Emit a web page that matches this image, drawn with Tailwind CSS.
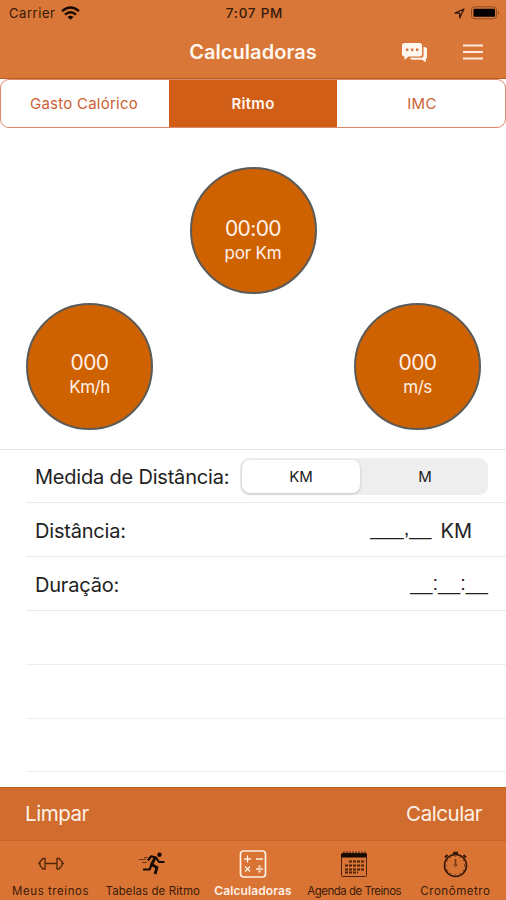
<!DOCTYPE html>
<html lang="pt-BR">
<head>
<meta charset="utf-8">
<meta name="viewport" content="width=device-width, initial-scale=1">
<title>Calculadoras</title>
<script src="https://cdn.jsdelivr.net/npm/@tailwindcss/browser@4"></script>
</head>
<body class="w-[506px] h-[900px] overflow-hidden bg-white font-['Inter','Liberation_Sans',sans-serif] text-[#222] flex flex-col whitespace-nowrap">
<header class="h-[79px] shrink-0 bg-[#d97738] border-b border-[#bd5c20]">
  <div class="h-[26px] grid grid-cols-3 items-center pl-[9px] pr-[6px] text-[13px] text-[#351a0a]">
    <div class="flex items-center gap-[6px]"><span class="tracking-[0.55px] pt-[2px]">Carrier</span>
      <svg class="w-[19px] h-[14px]" viewBox="0 0 19 14" fill="none" stroke="#160a03" stroke-width="2.4"><path d="M1 5.2Q9.5-2.2 18 5.2M4 8.6Q9.5 3.7 15 8.6"/><path d="M6.5 10.9Q9.5 8.5 12.5 10.9L9.5 13.8Z" fill="#160a03" stroke="none"/></svg>
    </div>
    <div class="text-center font-medium text-[13.5px] tracking-[0.75px]">7:07 PM</div>
    <div class="flex justify-end items-center gap-[6px]">
      <svg class="w-[11px] h-[11px]" viewBox="0 0 11 11" fill="none" stroke="#351a0a" stroke-width="1.3" stroke-linejoin="round"><path d="M10 1 .9 5.1H5.7V9.9Z"/></svg>
      <svg class="w-[29px] h-[14px]" viewBox="0 0 29 14"><rect x=".5" y=".8" width="25" height="12" rx="3" fill="none" stroke="#8f4d23"/><rect x="2.5" y="2.8" width="21.5" height="8" rx="1" fill="#000"/><path d="M27 4.5q2 2.3 0 4.6z" fill="#8f4d23"/></svg>
    </div>
  </div>
  <div class="h-[52px] grid grid-cols-[1fr_auto_1fr] items-center">
    <span></span>
    <h1 class="text-[20px] font-semibold text-[#fff6ef] tracking-[0.05px]">Calculadoras</h1>
    <div class="flex justify-end items-center gap-[35px] pr-[23px]">
      <svg class="w-[27px] h-[21px]" viewBox="0 0 27 21"><path d="M22.5 5H23.5Q26 5 26 7.500V14.500Q26 17 24.800 17V20.300L21 17.800H11.500Q9.200 17.800 9 15.800H20Q22.500 15.800 22.500 13.300Z" fill="#fff6ef"/><path d="M3.500 1H18.500Q21 1 21 3.500V12Q21 14.500 18.500 14.500H7.500L3.500 18V14.500Q1 14.500 1 12V3.500Q1 1 3.500 1Z" fill="#fff6ef"/><path d="M5 6.500h2.400v2.400H5zm5 0h2.400v2.400H10zm5 0h2.400v2.400H15z" fill="#d97738"/></svg>
      <svg class="w-[20px] h-[16px]" viewBox="0 0 20 16" stroke="#ffe9dc" stroke-width="2"><path d="M0 1.500H20M0 8H20M0 14.500H20"/></svg>
    </div>
  </div>
</header>
<nav class="h-[49px] shrink-0 rounded-[9px] border border-[#dc8a6b] overflow-hidden grid grid-cols-[168px_168px_1fr] items-stretch text-center text-[15px] text-[#cd6035]">
  <div class="flex items-center justify-center tracking-[0.25px] pt-px pr-[2px]">Gasto Calórico</div>
  <div class="flex items-center justify-center bg-[#d05e16] text-[#fff6ef] font-semibold tracking-[0.3px] pt-px">Ritmo</div>
  <div class="flex items-center justify-center tracking-[0.3px] pt-px pl-[2px]">IMC</div>
</nav>
<section class="h-[322px] shrink-0 border-b border-[#e6e6e6] pt-[39px] px-[26px] text-[#fff0e8] leading-none">
  <div class="flex justify-center"><div class="w-[127px] h-[127px] rounded-full bg-[#cf6200] border-2 border-[#5b5b59] pt-[49px] flex flex-col items-center gap-[6px]"><span class="text-[21px] tracking-[-0.6px]">00:00</span><span class="text-[17px] tracking-[-0.2px]">por Km</span></div></div>
  <div class="flex justify-between mt-[9px] -mr-px">
    <div class="w-[127px] h-[127px] rounded-full bg-[#cf6200] border-2 border-[#5b5b59] pt-[47px] flex flex-col items-center gap-[6px]"><span class="text-[21px] tracking-[-0.6px]">000</span><span class="text-[17px] tracking-[-0.5px]">Km/h</span></div>
    <div class="w-[127px] h-[127px] rounded-full bg-[#cf6200] border-2 border-[#5b5b59] pt-[47px] flex flex-col items-center gap-[6px]"><span class="text-[21px] tracking-[-0.6px]">000</span><span class="text-[17px] tracking-[-0.5px]">m/s</span></div>
  </div>
</section>
<main class="h-[337px] shrink-0 pl-[26px] text-[20px]">
  <div class="h-[53px] border-b border-[#e9e9e9] flex items-center justify-between pl-[9px] pr-[18px]">
    <span class="tracking-[-0.2px] pt-[2px]">Medida de Distância:</span>
    <div class="w-[248px] h-[37px] rounded-[9px] bg-[#eeeeef] p-[2px] grid grid-cols-[118px_1fr] text-[15px] text-center mt-px">
      <div class="rounded-[8px] bg-white shadow-[0_1px_3px_#0003] flex items-center justify-center pt-px">KM</div>
      <div class="flex items-center justify-center pt-px pl-[4px]">M</div>
    </div>
  </div>
  <div class="h-[54px] border-b border-[#e9e9e9] flex items-center justify-between pl-[9px] pr-[34px] pt-[2px]"><span class="tracking-[-0.2px]">Distância:</span><span class="flex items-center gap-[9px]"><span class="pb-[5px] font-medium font-['Liberation_Sans',sans-serif]">___,__</span><span>KM</span></span></div>
  <div class="h-[54px] border-b border-[#e9e9e9] flex items-center justify-between pl-[9px] pr-[18px] pt-[2px]"><span class="tracking-[-0.2px]">Duração:</span><span class="pb-[4px] font-['Liberation_Sans',sans-serif]">__:__:__</span></div>
  <div class="h-[54px] border-b border-[#eeeeee]"></div>
  <div class="h-[54px] border-b border-[#eeeeee]"></div>
  <div class="h-[53px] border-b border-[#eeeeee]"></div>
</main>
<div class="h-[53px] shrink-0 bg-[#d06d2e] border-t border-[#bd5c20] pl-[25px] pr-[24px] flex items-center justify-between text-[20.5px] tracking-[-0.45px] text-[#fff0e6]"><span>Limpar</span><span>Calcular</span></div>
<footer class="h-[61px] shrink-0 bg-[#d97435] border-t border-[#c66529] grid grid-cols-5 text-center text-[11.5px] text-[#3d1b08]">
  <div class="flex flex-col items-center pt-[8px] gap-[4px]">
    <svg class="w-[30px] h-[30px]" viewBox="0 0 30 30" fill="none" stroke="#512607" stroke-width="1.300"><path d="M9 14.500H21M2 14.500H4M26 14.500H28M4 12.500 7 9.500H9V20H7L4 16.500ZM26 12.500 23 9.500H21V20H23L26 16.500Z"/></svg><span class="leading-[16px] tracking-[0.55px]">Meus treinos</span>
  </div>
  <div class="flex flex-col items-center pt-[8px] gap-[4px]">
    <svg class="w-[30px] h-[30px]" viewBox="0 0 30 30" fill="none" stroke="#160a03" stroke-width="2.200" stroke-linejoin="round"><circle cx="22.500" cy="5.700" r="2.200" fill="#160a03" stroke="none"/><path d="M11 11.500 14 7.300 19 8.500 22 13H27.500"/><path d="M18 9 14.500 15.500 20 18.500 18 25" stroke-width="2.800"/><path d="M14.500 16 12.500 20.500H6"/><path d="M2 10.500H9M5 13.500H10M7 8.500H11" stroke="#743611" stroke-width="1"/></svg><span class="leading-[16px] tracking-[0.08px] pl-[2px]">Tabelas de Ritmo</span>
  </div>
  <div class="flex flex-col items-center pt-[8px] gap-[4px] text-[#fff0e6] font-semibold">
    <svg class="w-[30px] h-[30px]" viewBox="0 0 30 30" fill="none" stroke="#fff0e6" stroke-width="1.300"><rect x="2.500" y="2" width="25" height="26" rx="3" stroke-width="1.700"/><path d="M6 10H13M9.500 6.500V13.500M18 10H25M7 17.500 12 22.500M12 17.500 7 22.500M18 20H25"/><path d="M20.500 16.500h2v2h-2zm0 5h2v2h-2z" fill="#fff0e6" stroke="none"/></svg><span class="leading-[16px] text-[12px] tracking-[0.1px]">Calculadoras</span>
  </div>
  <div class="flex flex-col items-center pt-[8px] gap-[4px]">
    <svg class="w-[30px] h-[30px]" viewBox="0 0 30 30" fill="none" stroke="#4c2209"><rect x="2.500" y="4.500" width="25" height="23" rx="1"/><path d="M2.500 5H27.500V8H2.500Z" fill="#160a03" stroke="#160a03"/><path d="M5 2.500V5M8 2.500V5M11 2.500V5M14 2.500V5M17 2.500V5M20 2.500V5M23 2.500V5M26 2.500V5" stroke="#160a03"/><path d="M10 12.500H25M6 16.500H25M6 20.500H25M6 23.500H19" stroke-width="2" stroke-dasharray="3 1"/></svg><span class="leading-[16px] tracking-[-0.5px]">Agenda de Treinos</span>
  </div>
  <div class="flex flex-col items-center pt-[8px] gap-[4px]">
    <svg class="w-[30px] h-[30px]" viewBox="0 0 30 30" fill="none" stroke="#351707" stroke-width="1.600"><circle cx="15.500" cy="16.500" r="11"/><circle cx="15.500" cy="16.500" r="9.200" stroke-width="1" stroke-dasharray="1 3.700"/><path d="M13 4H18M15.500 3V6" stroke-width="2.400"/><path d="M5 8.500 7.500 6M23.500 6 26 8.500" stroke-width="2"/><path d="M15.500 10V16" stroke="#713511"/><circle cx="15.500" cy="16.300" r="1.200" stroke="#713511" stroke-width="1"/></svg><span class="leading-[16px] tracking-[0.55px]">Cronômetro</span>
  </div>
</footer>
</body>
</html>
